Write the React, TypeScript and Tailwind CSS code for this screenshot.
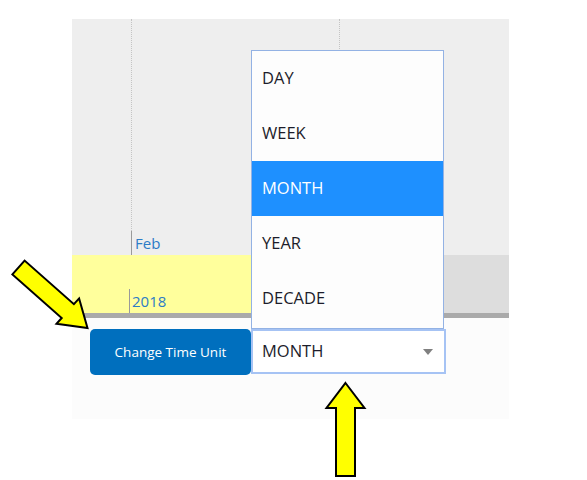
import React from "react";

const units = ["DAY", "WEEK", "MONTH", "YEAR", "DECADE"];

function Arrows() {
  // the two yellow call-out arrows drawn over the screenshot
  return (
    <svg
      className="pointer-events-none absolute left-0 top-0"
      width={587}
      height={480}
      viewBox="0 0 587 480"
    >
      <polygon
        points="12.4,274.4 24.6,260.6 73.9,304.2 79.1,298.4 87.5,328 56.5,323.8 61.7,318"
        fill="#ffff00"
        stroke="#000"
        strokeWidth={2}
      />
      <polygon
        points="345.5,383 364.5,408 355,408 355,476 336,476 336,408 326.5,408"
        fill="#ffff00"
        stroke="#000"
        strokeWidth={2}
      />
    </svg>
  );
}

export default function App() {
  const selected = "MONTH";

  return (
    <div className="relative h-[480px] w-[587px] overflow-hidden bg-white font-['Open_Sans',sans-serif]">
      <div className="ml-[72px] w-[437px] pt-[19px]">
        {/* timeline header */}
        <div className="flex h-[236px] bg-[#eeeeee]">
          <div className="w-[59px]" />
          <div className="flex w-[208px] flex-col justify-end border-l border-dotted border-[#c4c4c4]">
            <div className="-ml-px flex h-[24px] items-center border-l border-[#9a9a9a] pl-[3px] text-[15px] font-medium leading-none text-[#2d7cc6]">
              Feb
            </div>
          </div>
          <div className="flex-1 border-l border-dotted border-[#c4c4c4]" />
        </div>

        {/* highlighted row */}
        <div className="flex h-[58px]">
          <div className="flex w-[267px] items-end bg-[#ffff9c] pl-[57px]">
            <div className="flex h-[24px] items-center border-l border-[#9a9a9a] pl-[2px] text-[15px] font-medium leading-none text-[#2d7cc6]">
              2018
            </div>
          </div>
          <div className="flex-1 bg-[#dddddd]" />
        </div>
        <div className="h-[5px] bg-[#aaaaaa]" />

        {/* controls */}
        <div className="flex h-[101px] items-start bg-[#fcfcfc] pl-[18px] pt-[11px]">
          <button className="h-[46px] w-[161px] rounded-[5px] bg-[#006fbe] text-[13.5px] text-white">
            Change Time Unit
          </button>
          <div className="relative flex h-[45px] w-[195px] items-center justify-between border-2 border-[#a6c3f4] bg-white pl-[9px] pr-[11px] text-[16.5px] text-[#1d1d2b]">
            <span>{selected}</span>
            <svg width="10" height="6" viewBox="0 0 10 6">
              <polygon points="0,0 10,0 5,6" fill="#808080" />
            </svg>

            {/* open list */}
            <div className="absolute bottom-[calc(100%+2px)] left-[-2px] h-[279px] w-[193px] border border-[#93b2e4] bg-[#fdfdfd]">
              {units.map((u) => (
                <div
                  key={u}
                  className={`flex h-[55px] items-center pl-[10px] text-[16.5px] ${
                    u === selected ? "bg-[#1e90ff] text-white" : "text-[#1d1d2b]"
                  }`}
                >
                  {u}
                </div>
              ))}
            </div>
          </div>
        </div>
      </div>

      <Arrows />
    </div>
  );
}
